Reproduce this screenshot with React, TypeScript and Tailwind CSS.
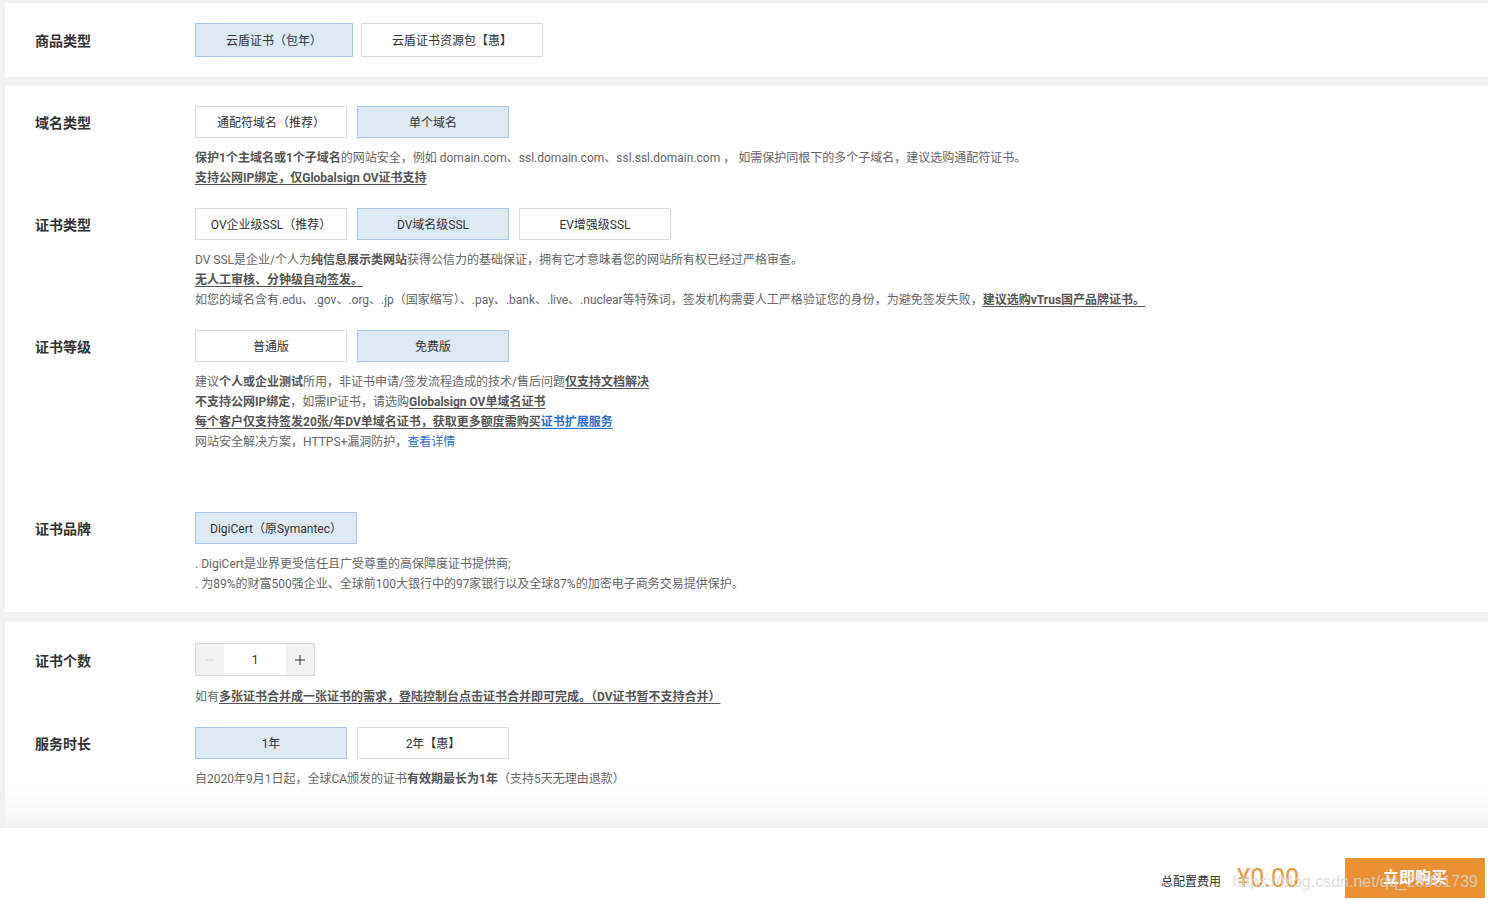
import React, { useState } from "react";
import { Minus, Plus } from "lucide-react";

type Opt = { label: string; w?: string };

const selCls = "bg-[#dee9f6] border-[#a9c8ea]";
const normCls = "bg-white border-[#dcdcdc]";

// 选项按钮组
const Options: React.FC<{
  options: Opt[];
  active: number;
  onPick: (i: number) => void;
  h?: string;
  gap?: string;
}> = ({ options, active, onPick, h = "h-8", gap = "gap-[10px]" }) => (
  <div className={`flex ${gap}`}>
    {options.map((o, i) => (
      <button
        key={o.label}
        onClick={() => onPick(i)}
        className={`${h} ${o.w ?? "w-[152px]"} border pt-[2px] text-xs text-[#333] flex items-center justify-center ${
          i === active ? selCls : normCls
        }`}
      >
        {o.label}
      </button>
    ))}
  </div>
);

const Row: React.FC<{ label: string; children: React.ReactNode; labelH?: string; className?: string }> = ({
  label,
  children,
  labelH = "h-8",
  className = "",
}) => (
  <div className={`flex ${className}`}>
    <div className={`w-[160px] shrink-0 ${labelH} pt-[2px] flex items-center text-sm font-bold text-[#333]`}>{label}</div>
    <div className="flex-1">{children}</div>
  </div>
);

const Desc: React.FC<{ children: React.ReactNode; mt?: string }> = ({ children, mt = "mt-[10px]" }) => (
  <div className={`${mt} text-xs leading-5 text-[#666]`}>{children}</div>
);

const B: React.FC<{ children: React.ReactNode; u?: boolean }> = ({ children, u }) => (
  <span className={`font-bold text-[#555] ${u ? "underline underline-offset-2" : ""}`}>{children}</span>
);

export default function App() {
  const [goods, setGoods] = useState(0);
  const [domain, setDomain] = useState(1);
  const [certType, setCertType] = useState(1);
  const [level, setLevel] = useState(1);
  const [brand, setBrand] = useState(0);
  const [count, setCount] = useState(1);
  const [years, setYears] = useState(0);

  return (
    <div className="min-h-screen bg-[#f0f1f3] pt-[3px] font-[Roboto,'Noto_Sans_CJK_SC',sans-serif]">
      {/* 商品类型 */}
      <div className="ml-[5px] bg-white pl-[30px] pt-5 pb-5">
        <Row label="商品类型" labelH="h-[34px]">
          <Options
            h="h-[34px]"
            gap="gap-2"
            active={goods}
            onPick={setGoods}
            options={[
              { label: "云盾证书（包年）", w: "w-[158px]" },
              { label: "云盾证书资源包【惠】", w: "w-[182px]" },
            ]}
          />
        </Row>
      </div>

      {/* 证书配置 */}
      <div className="ml-[5px] mt-[9px] bg-white pl-[30px] pt-5 pb-[18px]">
        <Row label="域名类型">
          <Options
            active={domain}
            onPick={setDomain}
            options={[{ label: "通配符域名（推荐）" }, { label: "单个域名" }]}
          />
          <Desc>
            <div>
              <B>保护1个主域名或1个子域名</B>的网站安全，例如 domain.com、ssl.domain.com、ssl.ssl.domain.com ，
              如需保护同根下的多个子域名，建议选购通配符证书。
            </div>
            <div>
              <B u>支持公网IP绑定，仅Globalsign OV证书支持</B>
            </div>
          </Desc>
        </Row>

        <Row label="证书类型" className="mt-5">
          <Options
            active={certType}
            onPick={setCertType}
            options={[{ label: "OV企业级SSL（推荐）" }, { label: "DV域名级SSL" }, { label: "EV增强级SSL" }]}
          />
          <Desc>
            <div>
              DV SSL是企业/个人为<B>纯信息展示类网站</B>获得公信力的基础保证，拥有它才意味着您的网站所有权已经过严格审查。
            </div>
            <div>
              <B u>无人工审核、分钟级自动签发。</B>
            </div>
            <div>
              如您的域名含有.edu、.gov、.org、.jp（国家缩写）、.pay、.bank、.live、.nuclear等特殊词，签发机构需要人工严格验证您的身份，为避免签发失败，
              <B u>建议选购vTrus国产品牌证书。</B>
            </div>
          </Desc>
        </Row>

        <Row label="证书等级" className="mt-5">
          <Options active={level} onPick={setLevel} options={[{ label: "普通版" }, { label: "免费版" }]} />
          <Desc>
            <div>
              建议<B>个人或企业测试</B>所用，非证书申请/签发流程造成的技术/售后问题<B u>仅支持文档解决</B>
            </div>
            <div>
              <B>不支持公网IP绑定</B>，如需IP证书，请选购<B u>Globalsign OV单域名证书</B>
            </div>
            <div>
              <B u>每个客户仅支持签发20张/年DV单域名证书，获取更多额度需购买</B>
              <span className="font-bold text-[#2a6fd4] underline underline-offset-2">证书扩展服务</span>
            </div>
            <div>
              网站安全解决方案，HTTPS+漏洞防护，<span className="text-[#2a6fd4]">查看详情</span>
            </div>
          </Desc>
        </Row>

        <Row label="证书品牌" className="mt-[60px]">
          <Options active={brand} onPick={setBrand} options={[{ label: "DigiCert（原Symantec）", w: "w-[162px]" }]} />
          <Desc>
            <div>. DigiCert是业界更受信任且广受尊重的高保障度证书提供商;</div>
            <div>. 为89%的财富500强企业、全球前100大银行中的97家银行以及全球87%的加密电子商务交易提供保护。</div>
          </Desc>
        </Row>
      </div>

      {/* 数量与时长 */}
      <div className="ml-[5px] mt-[10px] bg-linear-to-b from-white from-80% to-[#f3f3f3] pl-[30px] pt-[21px] pb-[39px]">
        <Row label="证书个数" labelH="h-[33px]">
          <div className="flex h-[33px] w-[120px] border border-[#d9d9d9]">
            <button
              onClick={() => setCount(Math.max(1, count - 1))}
              className="w-[28px] bg-[#f2f2f2] flex items-center justify-center text-[#ccc]"
            >
              <Minus size={14} strokeWidth={1.5} />
            </button>
            <div className="flex-1 flex items-center justify-center text-xs text-[#333]">{count}</div>
            <button
              onClick={() => setCount(count + 1)}
              className="w-[28px] bg-[#f2f2f2] flex items-center justify-center text-[#333]"
            >
              <Plus size={16} strokeWidth={1.5} />
            </button>
          </div>
          <Desc mt="mt-[11px]">
            如有<B u>多张证书合并成一张证书的需求，登陆控制台点击证书合并即可完成。（DV证书暂不支持合并）</B>
          </Desc>
        </Row>

        <Row label="服务时长" className="mt-5">
          <Options active={years} onPick={setYears} options={[{ label: "1年" }, { label: "2年【惠】" }]} />
          <Desc>
            自2020年9月1日起，全球CA颁发的证书<B>有效期最长为1年</B>（支持5天无理由退款）
          </Desc>
        </Row>
      </div>

      {/* 底部结算 */}
      <div className="relative h-[72px] bg-white flex items-end justify-end pr-[3px] pb-[2px]">
        <div className="h-10 flex items-center">
          <span className="mt-2 text-xs text-[#333]">总配置费用</span>
          <span className="ml-4 text-[25px] leading-none text-[#f0943a]">¥0.00</span>
        </div>
        <button className="ml-[46px] h-10 w-[140px] bg-[#ec9036] text-base font-bold text-white">立即购买</button>
        <div className="pointer-events-none absolute right-[10px] bottom-[10px] text-[16px] leading-none font-['Liberation_Sans',sans-serif] text-[rgba(215,215,215,0.8)]">
          https://blog.csdn.net/qq_28961739
        </div>
      </div>
    </div>
  );
}
